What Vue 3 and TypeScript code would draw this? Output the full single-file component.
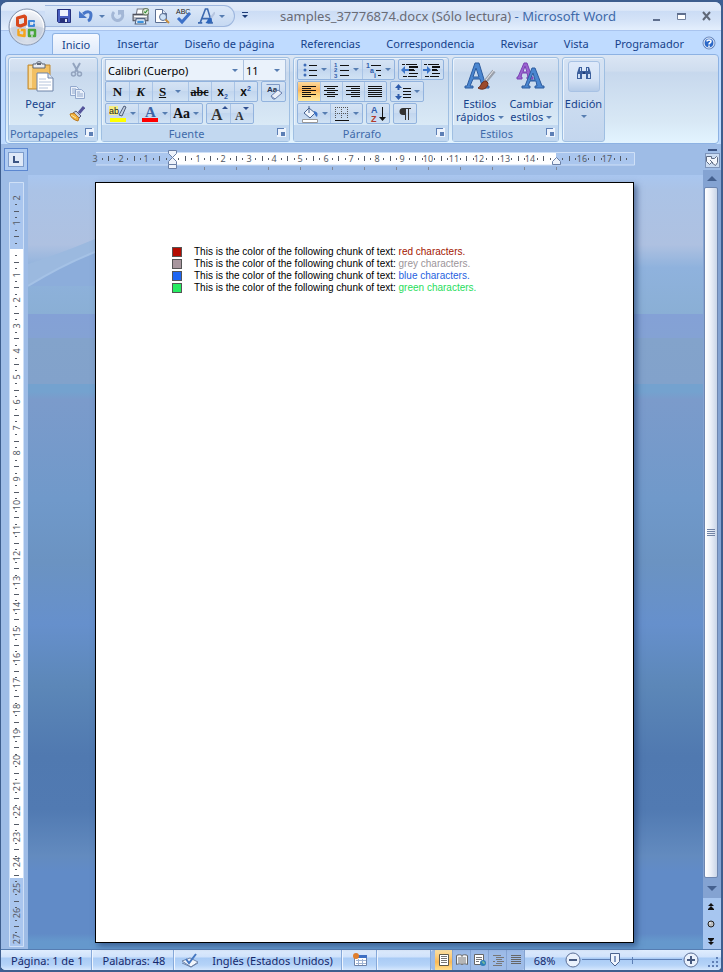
<script setup lang="ts">
import { ref } from 'vue'

const tabs = [
  'Inicio',
  'Insertar',
  'Diseño de página',
  'Referencias',
  'Correspondencia',
  'Revisar',
  'Vista',
  'Programador',
]
const activeTab = ref('Inicio')

const fontName = ref('Calibri (Cuerpo)')
const fontSize = ref('11')
const align = ref('left')
const view = ref('print')
const zoom = ref(31)

const lines = [
  { id: 'red', label: 'red characters.' },
  { id: 'grey', label: 'grey characters.' },
  { id: 'blue', label: 'blue characters.' },
  { id: 'green', label: 'green characters.' },
]

interface Mark {
  kind: 'num' | 'half' | 'dot'
  pos: number
  label: string
}

// Ruler marks: a number per centimetre, a bar at each half, a dot at each quarter.
function marks(origin: number, cm: number, from: number, to: number, skip: number[]): Mark[] {
  const out: Mark[] = []
  for (let q = from * 4; q <= to * 4; q++) {
    const pos = Math.round(origin + (q * cm) / 4)
    if (q % 4 === 0) {
      if (!skip.includes(q / 4)) out.push({ kind: 'num', pos, label: String(Math.abs(q / 4)) })
    } else {
      out.push({ kind: q % 2 === 0 ? 'half' : 'dot', pos, label: '' })
    }
  }
  return out
}

const hMarks = marks(77, 25.6, -3, 17.75, [0, 15])
const vMarks = marks(67, 25.55, -2, 27, [0])
const tabStops = Array.from({ length: 12 }, (_, i) => 109 + i * 32)
</script>

<template>
  <div class="window">
    <header class="titlebar">
      <button class="office" aria-label="Botón de Office">
        <svg viewBox="0 0 38 38" width="38" height="38">
          <defs>
            <radialGradient id="orb" cx="50%" cy="85%" r="80%">
              <stop offset="0" stop-color="#ffffff" />
              <stop offset=".5" stop-color="#d3d9e4" />
              <stop offset="1" stop-color="#f4f6fa" />
            </radialGradient>
          </defs>
          <circle cx="19" cy="19" r="18" fill="url(#orb)" stroke="#7f8fa9" />
          <circle cx="19" cy="19" r="16.5" fill="none" stroke="#fff" />
          <path d="M2 20a17 17 0 0 0 34 0c-9-3-25-3-34 0z" fill="#bcc6d8" opacity=".55" />
          <g fill="none" stroke-linejoin="round">
            <path d="M9.500 17v-7l7-2 1 1v7l-5 2z" stroke="#d8481c" stroke-width="3" />
            <path d="M21 13h5v5h-5z" stroke="#3f86d8" stroke-width="2" />
            <path d="M10.500 22h6v6l-6-1z" stroke="#f3a51f" stroke-width="2.500" />
            <path d="M21 22h6v6h-6z" stroke="#4aa63c" stroke-width="2.500" />
          </g>
          <path d="M18 19h2M19 18v2M11 22h2M24 15h3M23 28h2" stroke="#fff" />
        </svg>
      </button>
      <div class="qat">
        <button class="q" aria-label="Guardar">
          <svg viewBox="0 0 16 16" width="16" height="16">
            <path d="M1.500 1.500h13v13h-12l-1-1z" fill="#4a5fc0" stroke="#25307c" />
            <path d="M4 2h8v6H4z" fill="#eef3fc" />
            <path d="M4 10h8v4H4z" fill="#25307c" />
            <path d="M9 11h2v3H9z" fill="#dfe7f6" />
          </svg>
        </button>
        <button class="q" aria-label="Deshacer">
          <svg viewBox="0 0 16 16" width="16" height="16">
            <path d="M5 6c4-3 8-3 8 1 0 3-1 5-3 6" fill="none" stroke="#4877c8" stroke-width="3" />
            <path d="M1 3v7h8z" fill="#4877c8" />
          </svg>
        </button>
        <button class="mini" aria-label="Opciones de deshacer"><i class="caret"></i></button>
        <button class="q" aria-label="Repetir">
          <svg viewBox="0 0 16 16" width="16" height="16">
            <path d="M4 4a5 5 0 1 0 8 1" fill="none" stroke="#a3b7d6" stroke-width="3" />
            <path d="M8 2h6v6l-2-2-4 1z" fill="#a3b7d6" />
          </svg>
        </button>
        <button class="q" aria-label="Imprimir">
          <svg viewBox="0 0 16 16" width="17" height="17">
            <path d="M4 6 5 1h7l-1 5z" fill="#fff" stroke="#777b86" />
            <path d="M1 6h14v6H1z" fill="#b7bac2" stroke="#4f525c" />
            <path d="M2 8h12" stroke="#fff" />
            <path d="M4 10h8l1 5H3z" fill="#e8f1fb" stroke="#51627e" />
            <path d="M5 13h6" stroke="#3d92dd" stroke-width="2" />
            <circle cx="13" cy="3.500" r="3" fill="#dfe9d9" stroke="#6d7e65" />
            <path d="m11.500 3.500 1 1 2-2.500" fill="none" stroke="#2c8b2c" />
          </svg>
        </button>
        <button class="q" aria-label="Vista preliminar">
          <svg viewBox="0 0 16 16" width="16" height="16">
            <path d="M1.500 1.500h7l4 4v9h-11z" fill="#fff" stroke="#5b6f93" />
            <path d="M8.500 1.500v4h4" fill="#dce6f5" stroke="#5b6f93" />
            <circle cx="9" cy="9" r="3.500" fill="#cfe3f7" stroke="#5b6f93" />
            <path d="m11.500 11.500 3.500 3.500" stroke="#c98d3b" stroke-width="2" />
          </svg>
        </button>
        <button class="q" aria-label="Ortografía">
          <svg viewBox="0 0 18 18" width="18" height="18">
            <text x="1" y="7" font-size="7" fill="#1a1a1a">ABC</text>
            <path d="m3 11 4 4 8-9" fill="none" stroke="#3d71c8" stroke-width="3" />
          </svg>
        </button>
        <button class="q" aria-label="Estilos rápidos">
          <svg viewBox="0 0 16 16" width="17" height="17">
            <path d="M2 14 7 1h2l4 13M4 10h7M0 14h4M9 14h5" fill="none" stroke="#3c69b0" stroke-width="1.500" />
            <path d="m16 4-5 7" stroke="#b7c6e0" stroke-width="2" />
            <path d="M12 9c-3 0-3 4-5 5 3 1 6 0 6-4z" fill="#2b65bd" />
          </svg>
        </button>
        <button class="mini" aria-label="Más estilos"><i class="caret"></i></button>
      </div>
      <button class="customize" aria-label="Personalizar barra"><i class="caret dark"></i></button>
      <h1 class="title">
        <span class="file">samples_37776874.docx (Sólo lectura)</span> - Microsoft Word
      </h1>
      <div class="controls">
        <button aria-label="Minimizar">
          <svg viewBox="0 0 12 12" width="12" height="12"><path d="M2 10h7" stroke="#5f6f8e" stroke-width="2" /></svg>
        </button>
        <button aria-label="Maximizar">
          <svg viewBox="0 0 12 12" width="12" height="12">
            <path d="M1.500 3.500h8v6h-8z" fill="#fff" stroke="#71809c" />
            <path d="M1 4h9" stroke="#5f6f8e" stroke-width="2" />
          </svg>
        </button>
        <button aria-label="Cerrar">
          <svg viewBox="0 0 12 12" width="12" height="12">
            <path d="m2 2 7 8M9 2l-7 8" stroke="#5f6878" stroke-width="2" />
          </svg>
        </button>
      </div>
    </header>

    <nav class="tabs">
      <button v-for="t in tabs" :key="t" class="tab" :class="{ active: t === activeTab }" @click="activeTab = t">
        {{ t }}
      </button>
      <button class="help" aria-label="Ayuda">
        <svg viewBox="0 0 14 14" width="14" height="14">
          <circle cx="7" cy="7" r="6" fill="#2b68c8" stroke="#6e89b8" />
          <circle cx="7" cy="7" r="5" fill="none" stroke="#fff" />
          <path d="M5 5.500c0-2 4-2 4 0 0 1.500-2 1-2 3M7 9.500v1.500" fill="none" stroke="#fff" stroke-width="1.500" />
        </svg>
      </button>
    </nav>

    <section class="ribbon">
      <div class="group clip">
        <div class="body row">
          <button class="big paste">
            <svg viewBox="0 0 32 32" width="32" height="32">
              <path d="M3 4h22v24H3z" fill="#f2c063" stroke="#c08a35" />
              <path d="M4 5h3v22H4z" fill="#fadb9a" />
              <path d="M8 3h3c0-3 6-3 6 0h3v4H8z" fill="#e9ecf2" stroke="#5e6675" />
              <path d="M12 2h4v2h-4z" fill="#5e6675" />
              <path d="M12 12h11l5 5v13H12z" fill="#fff" stroke="#6d83a8" />
              <path d="M23 12v5h5" fill="#dfe8f6" stroke="#6d83a8" />
              <path d="M14 18h7M14 21h12M14 24h12M14 27h9" stroke="#b5c4dc" />
            </svg>
            <span>Pegar</span>
            <i class="caret"></i>
          </button>
          <div class="stack">
            <button class="icon" aria-label="Cortar">
              <svg viewBox="0 0 16 16" width="16" height="16" fill="none" stroke="#93a4bf">
                <path d="m4 1 5 9M11 1 6 10" stroke-width="2" />
                <circle cx="4.500" cy="12" r="2" stroke-width="1.500" />
                <circle cx="10.500" cy="12" r="2" stroke-width="1.500" />
              </svg>
            </button>
            <button class="icon" aria-label="Copiar">
              <svg viewBox="0 0 16 16" width="16" height="16" fill="#e9f0fa" stroke="#92a8cd">
                <path d="M1.500 2.500h6l2 2v7h-8z" />
                <path d="M3 5h4M3 7h3M3 9h3" />
                <path d="M6.500 5.500h6l3 3v6h-9z" />
                <path d="M8 8h3M8 10h6M8 12h6" />
              </svg>
            </button>
            <button class="icon" aria-label="Copiar formato">
              <svg viewBox="0 0 16 16" width="16" height="16">
                <path d="m15 1-5 6" stroke="#55559b" stroke-width="3" />
                <path d="m7 5 5 5-2 2-6-5z" fill="#c9cfdd" stroke="#555d80" />
                <path d="M5 7 1 8c1 4 4 6 8 7l1-3z" fill="#f0b13d" stroke="#bb7a22" />
                <path d="m2 9 5 3" stroke="#fde6a4" />
              </svg>
            </button>
          </div>
        </div>
        <footer>Portapapeles<button class="launch" aria-label="Cuadro Portapapeles"></button></footer>
      </div>

      <div class="group font">
        <div class="body">
          <div class="combos">
            <label class="combo name"
              ><select v-model="fontName" aria-label="Fuente"><option>Calibri (Cuerpo)</option></select
              ><i class="caret"></i
            ></label>
            <label class="combo size"
              ><select v-model="fontSize" aria-label="Tamaño de fuente"><option>11</option></select
              ><i class="caret"></i
            ></label>
          </div>
          <div class="row">
            <div class="set">
              <button class="b serif" aria-label="Negrita">N</button>
              <button class="b serif italic" aria-label="Cursiva">K</button>
              <button class="b serif more wide" aria-label="Subrayado"><u>S</u><i class="caret"></i></button>
              <button class="b serif small" aria-label="Tachado"><s>abc</s></button>
              <button class="b script" aria-label="Subíndice">x<sub>2</sub></button>
              <button class="b script" aria-label="Superíndice">x<sup>2</sup></button>
            </div>
            <div class="set">
              <button class="b" aria-label="Borrar formato">
                <svg viewBox="0 0 18 18" width="18" height="18">
                  <path d="M1.500 1.500h13v8" fill="none" stroke="#7d97c4" />
                  <text x="2" y="9" font-size="8" font-weight="bold" fill="#26324f">Aa</text>
                  <path d="m6 13 7-6 4 3-7 6H8z" fill="#e9eef8" stroke="#6980ae" />
                  <path d="m6 13 4 3" stroke="#6980ae" />
                </svg>
              </button>
            </div>
          </div>
          <div class="row">
            <div class="set">
              <button class="b more" aria-label="Color de resaltado">
                <svg viewBox="0 0 18 18" width="18" height="18">
                  <path d="M0 1h9v9H0z" fill="#f6ef83" />
                  <text x="0" y="9" font-size="9" fill="#222">ab</text>
                  <path d="m15 1-5 9 3 1 4-9z" fill="#c3cfe2" stroke="#4d5c7a" />
                  <path d="M1 13h16v4H1z" fill="#ffff00" />
                </svg>
                <i class="caret"></i>
              </button>
              <button class="b more" aria-label="Color de fuente">
                <svg viewBox="0 0 18 18" width="18" height="18">
                  <text x="4" y="12" class="seriftext" font-size="15" font-weight="bold" fill="#3e65a5">A</text>
                  <path d="M1 13h16v4H1z" fill="#ff0000" />
                </svg>
                <i class="caret"></i>
              </button>
              <button class="b serif more case" aria-label="Cambiar mayúsculas">Aa<i class="caret"></i></button>
            </div>
            <div class="set">
              <button class="b" aria-label="Agrandar fuente">
                <svg viewBox="0 0 18 18" width="18" height="18">
                  <text x="1" y="15" class="seriftext" font-size="16" font-weight="bold" fill="#333">A</text>
                  <path d="m12 4 3-3 3 3z" fill="#2f4f90" />
                </svg>
              </button>
              <button class="b" aria-label="Encoger fuente">
                <svg viewBox="0 0 18 18" width="18" height="18">
                  <text x="2" y="15" class="seriftext" font-size="12" font-weight="bold" fill="#333">A</text>
                  <path d="m10 2 3 3 3-3z" fill="#2f4f90" />
                </svg>
              </button>
            </div>
          </div>
        </div>
        <footer>Fuente<button class="launch" aria-label="Cuadro Fuente"></button></footer>
      </div>

      <div class="group para">
        <div class="body">
          <div class="row">
            <div class="set">
              <button class="b more" aria-label="Viñetas">
                <svg viewBox="0 0 16 16" width="16" height="16">
                  <g fill="#3f6db8"><circle cx="3" cy="3" r="1.500" /><circle cx="3" cy="8" r="1.500" /><circle cx="3" cy="13" r="1.500" /></g>
                  <path d="M7 3.500h8M7 8.500h8M7 13.500h8" stroke="#111" />
                </svg>
                <i class="caret"></i>
              </button>
              <button class="b more" aria-label="Numeración">
                <svg viewBox="0 0 16 16" width="16" height="16">
                  <g font-size="6" font-weight="bold" fill="#2f5cab"><text x="0" y="5">1</text><text x="0" y="10">2</text><text x="0" y="16">3</text></g>
                  <path d="M6 3.500h9M6 8.500h9M6 13.500h9" stroke="#111" />
                </svg>
                <i class="caret"></i>
              </button>
              <button class="b more" aria-label="Lista multinivel">
                <svg viewBox="0 0 16 16" width="16" height="16">
                  <g font-size="7" font-weight="bold" fill="#2f5cab"><text x="0" y="6">1</text><text x="4" y="11">a</text><text x="8" y="16">i</text></g>
                  <path d="M5 3.500h10M10 8.500h5M12 13.500h3" stroke="#111" />
                </svg>
                <i class="caret"></i>
              </button>
            </div>
            <div class="set">
              <button class="b" aria-label="Disminuir sangría">
                <svg viewBox="0 0 18 16" width="18" height="16">
                  <path d="M1 2.500h3M5 2.500h11M8 5.500h9M8 8.500h6M8 11.500h9M2 14.500h4M7 14.500h9" stroke="#111" />
                  <path d="M8 4h9v2H8zM8 7h5v2H8z" fill="#111" />
                  <path d="m0 8 4-4v3h4v2H4v3z" fill="#3b75c9" />
                </svg>
              </button>
              <button class="b" aria-label="Aumentar sangría">
                <svg viewBox="0 0 18 16" width="18" height="16">
                  <path d="M1 2.500h3M5 2.500h11M9 5.500h8M9 8.500h6M9 11.500h8M2 14.500h4M7 14.500h9" stroke="#111" />
                  <path d="M9 4h8v2H9zM9 7h5v2H9z" fill="#111" />
                  <path d="m8 8-4-4v3H0v2h4v3z" fill="#3b75c9" />
                </svg>
              </button>
            </div>
          </div>
          <div class="row">
            <div class="set">
              <button class="b" :class="{ on: align === 'left' }" aria-label="Izquierda" @click="align = 'left'">
                <svg viewBox="0 0 16 14" width="16" height="14"><path d="M1 1.500h14M1 3.500h9M1 5.500h14M1 7.500h9M1 9.500h14M1 11.500h9" stroke="#111" /></svg>
              </button>
              <button class="b" :class="{ on: align === 'center' }" aria-label="Centrar" @click="align = 'center'">
                <svg viewBox="0 0 16 14" width="16" height="14"><path d="M1 1.500h14M4 3.500h8M1 5.500h14M4 7.500h8M1 9.500h14M4 11.500h8" stroke="#111" /></svg>
              </button>
              <button class="b" :class="{ on: align === 'right' }" aria-label="Derecha" @click="align = 'right'">
                <svg viewBox="0 0 16 14" width="16" height="14"><path d="M1 1.500h14M6 3.500h9M1 5.500h14M6 7.500h9M1 9.500h14M6 11.500h9" stroke="#111" /></svg>
              </button>
              <button class="b" :class="{ on: align === 'full' }" aria-label="Justificar" @click="align = 'full'">
                <svg viewBox="0 0 16 14" width="16" height="14"><path d="M1 1.500h14M1 3.500h14M1 5.500h14M1 7.500h14M1 9.500h14M1 11.500h14" stroke="#111" /></svg>
              </button>
            </div>
            <div class="set">
              <button class="b more" aria-label="Interlineado">
                <svg viewBox="0 0 16 16" width="16" height="16">
                  <path d="M3.500 3v3M3.500 10v4" stroke="#2f5cab" stroke-width="2" />
                  <path d="m0 4 3.500-4L7 4zM0 12l3.500 4L7 12z" fill="#2f5cab" />
                  <path d="M8 4.500h8M8 7.500h8M8 10.500h8M8 13.500h8" stroke="#111" />
                </svg>
                <i class="caret"></i>
              </button>
            </div>
          </div>
          <div class="row">
            <div class="set">
              <button class="b more" aria-label="Sombreado">
                <svg viewBox="0 0 18 18" width="18" height="18">
                  <path d="m3 8 5-5 6 5-5 5z" fill="#f1f5fb" stroke="#45618f" />
                  <path d="M8 1v7" stroke="#45618f" />
                  <path d="M13 6c4 1 4 3 3 6-2-1-2-3-3-4z" fill="#3e74c7" />
                  <path d="M1.500 14.500h15v3h-15z" fill="#fff" stroke="#999" />
                </svg>
                <i class="caret"></i>
              </button>
              <button class="b more" aria-label="Bordes">
                <svg viewBox="0 0 16 16" width="16" height="16">
                  <path d="M1.500 1v12M7.500 1v12M13.500 1v12M1 1.500h13M1 7.500h13" stroke="#555" stroke-dasharray="1 1" />
                  <path d="M1 14.500h14" stroke="#111" />
                </svg>
                <i class="caret"></i>
              </button>
            </div>
            <div class="set">
              <button class="b" aria-label="Ordenar">
                <svg viewBox="0 0 18 18" width="18" height="18">
                  <g font-size="9" font-weight="bold"><text x="2" y="8" fill="#2f5cab">A</text><text x="2" y="17" fill="#b13a2c">Z</text></g>
                  <path d="M13.500 2v13" stroke="#111" />
                  <path d="M10 12h7l-3.500 4z" fill="#111" />
                </svg>
              </button>
            </div>
            <div class="set">
              <button class="b" aria-label="Mostrar todo">
                <svg viewBox="0 0 16 16" width="16" height="16">
                  <path d="M8 2H6a3 3 0 0 0 0 7h2z" fill="#333" />
                  <path d="M6 2.500h8M8.500 2v12M11.500 2v12" stroke="#333" />
                </svg>
              </button>
            </div>
          </div>
        </div>
        <footer>Párrafo<button class="launch" aria-label="Cuadro Párrafo"></button></footer>
      </div>

      <div class="group styles">
        <div class="body row">
          <button class="big">
            <svg viewBox="0 0 32 32" width="32" height="32">
              <path d="M11 2h4l7 23h3v2h-9v-2h2l-2-7H9l-3 7h3v2H1v-2h2zm1 5-3 9h6z" fill="#4a86d0" stroke="#2d5c9f" />
              <path d="m30 10-9 11" stroke="#9aa0ab" stroke-width="4" />
              <path d="m30 9-8 10" stroke="#e8e8ec" />
              <path d="M22 20c-5 0-5 6-8 7 5 3 10 0 10-5z" fill="#9b4a2c" stroke="#6e2e1c" />
            </svg>
            <span>Estilos</span>
            <span>rápidos <i class="caret"></i></span>
          </button>
          <button class="big">
            <svg viewBox="0 0 32 32" width="32" height="32">
              <path d="M9 2h3l5 14h1v2h-6v-2h1l-1-4H7l-1 4h1v2H2v-2h1zm1 3-2 6h4z" fill="#9a63d0" stroke="#7a43b4" />
              <path d="M17 7h3l7 18h2v2h-9v-2h2l-1-5h-6l-2 5h2v2H7v-2h3zm1 5-3 7h5z" fill="#4a86d0" stroke="#2d5c9f" />
            </svg>
            <span>Cambiar</span>
            <span>estilos <i class="caret"></i></span>
          </button>
        </div>
        <footer>Estilos<button class="launch" aria-label="Cuadro Estilos"></button></footer>
      </div>

      <div class="group edit">
        <button class="big">
          <span class="plate">
            <svg viewBox="0 0 18 16" width="18" height="16">
              <path d="M4 1h3v4h4V1h3l2 6v6h-5V8H7v5H2V7z" fill="#3c5f9c" />
              <path d="M3 8h2v4H3zM13 8h2v4h-2zM5 2h1v3H5zM12 2h1v3h-1z" fill="#cfe0f6" />
              <path d="M8 6h2v2H8z" fill="#22407a" />
            </svg>
          </span>
          <span>Edición</span>
          <i class="caret"></i>
        </button>
      </div>
    </section>

    <main class="work">
      <button class="tabsel" aria-label="Tabulación izquierda"><span></span></button>
      <div class="hruler">
        <svg width="540" height="20" viewBox="0 0 540 20">
          <path d="M1 3h538v12H1z" fill="#aac6ee" />
          <path d="M77 3h384v12H77z" fill="#fff" />
          <path d="M1 2.500h538.500v12.500H1" fill="none" stroke="#cfe0f7" />
          <template v-for="m in hMarks" :key="m.pos">
            <text v-if="m.kind === 'num'" :x="m.pos" y="12" class="num">{{ m.label }}</text>
            <rect v-else-if="m.kind === 'half'" :x="m.pos" y="6" width="1" height="5" fill="#555b66" />
            <rect v-else :x="m.pos" y="8" width="1" height="2" fill="#555b66" />
          </template>
          <rect v-for="x in tabStops" :key="x" :x="x" y="17" width="1" height="3" fill="#7f8797" />
          <g fill="#eef3fb" stroke="#6b80a6">
            <path d="M73.500.500h8v3l-4 4-4-4z" />
            <path d="m77.500 7.500 4 4v3h-8v-3z" />
            <path d="M73.500 14.500h8v4h-8z" />
            <path d="m461.500 7.500 4 4v3h-8v-3z" />
          </g>
        </svg>
      </div>

      <div class="side">
        <div class="corner">
          <i class="split"></i>
          <button aria-label="Regla">
            <svg viewBox="0 0 14 12" width="14" height="12" fill="#f4f7fc" stroke="#5e6b83">
              <path d="M1.500 1.500h5v2h3l2-2 1 1v5l-2 3-4-3-2 2-3-3z" />
              <path d="m5 5 3 3" />
            </svg>
          </button>
        </div>
        <div class="scroll">
          <button class="arrow" aria-label="Subir"><i class="tri up"></i></button>
          <div class="thumb"><i></i></div>
          <button class="arrow down" aria-label="Bajar"><i class="tri"></i></button>
        </div>
        <div class="browse">
          <button aria-label="Página anterior">
            <svg viewBox="0 0 8 8" width="8" height="8"><path d="m4 0 3 3H1zM4 3l3 3H1zM1 6h6v1H1z" fill="#111" /></svg>
          </button>
          <button aria-label="Objeto de búsqueda">
            <svg viewBox="0 0 8 8" width="8" height="8"><circle cx="4" cy="4" r="3" fill="#b9bcc0" stroke="#222" /><path d="M2 3h2" stroke="#fff" /></svg>
          </button>
          <button aria-label="Página siguiente">
            <svg viewBox="0 0 8 8" width="8" height="8"><path d="m4 8 3-3H1zM4 5l3-3H1zM1 1h6v1H1z" fill="#111" /></svg>
          </button>
        </div>
      </div>

      <div class="vruler">
        <svg width="15" height="765" viewBox="0 0 15 765">
          <path d="M0 0h15v765H0z" fill="#aac6ee" />
          <path d="M0 67h15v629H0z" fill="#fff" />
          <path d="M.500.500h14v764H.500z" fill="none" stroke="#cfe0f7" />
          <template v-for="m in vMarks" :key="m.pos">
            <text v-if="m.kind === 'num'" :transform="`translate(11 ${m.pos}) rotate(-90)`" class="num">{{ m.label }}</text>
            <rect v-else-if="m.kind === 'half'" x="5" :y="m.pos" width="5" height="1" fill="#555b66" />
            <rect v-else x="6" :y="m.pos" width="2" height="1" fill="#555b66" />
          </template>
        </svg>
      </div>

      <div class="desk">
        <svg class="swoosh" viewBox="0 0 67 80" width="67" height="80">
          <path d="M0 51Q34 40 67 26V39Q34 52 0 73z" fill="#9bb9df" />
          <path d="M0 73Q34 52 67 39V73z" fill="#8caddb" />
          <path d="M0 73Q34 52 67 39" fill="none" stroke="#a5c2e6" stroke-width="2" />
        </svg>
        <article class="page">
          <ul>
            <li v-for="l in lines" :key="l.id" :class="l.id">
              <i></i>
              <p>This is the color of the following chunk of text: <span>{{ l.label }}</span></p>
            </li>
          </ul>
        </article>
      </div>
    </main>

    <footer class="status">
      <button class="cell">Página: 1 de 1</button>
      <button class="cell">Palabras: 48</button>
      <button class="cell nosep" aria-label="Revisión">
        <svg viewBox="0 0 16 16" width="16" height="16">
          <path d="m0 9 8-3 8 4-7 5z" fill="#f2f6fc" stroke="#6d83a8" />
          <path d="m0 11 9 4 7-4" fill="none" stroke="#6d83a8" />
          <path d="m4 7 3 4 7-9" fill="none" stroke="#4477c2" stroke-width="2" />
        </svg>
      </button>
      <button class="cell">Inglés (Estados Unidos)</button>
      <button class="cell" aria-label="Macro">
        <svg viewBox="0 0 16 16" width="16" height="16">
          <path d="M2.500 3.500h12v10h-12z" fill="#fff" stroke="#6d83a8" />
          <path d="M5 3h10v3H5z" fill="#3d6fc4" />
          <path d="M4 8.500h10M4 11.500h10M6.500 7v6M10.500 7v6" stroke="#9fb3d3" />
          <circle cx="4" cy="4" r="3" fill="#e07f2e" />
        </svg>
      </button>
      <span class="fill"></span>
      <div class="views">
        <button :class="{ on: view === 'print' }" aria-label="Diseño de impresión" @click="view = 'print'">
          <svg viewBox="0 0 12 12" width="12" height="12"><path d="M1.500.500h9v11h-9z" fill="#fff" stroke="#5e5a4c" /><path d="M3 2.500h6M3 4.500h6M3 6.500h6M3 8.500h6" stroke="#777" /></svg>
        </button>
        <button :class="{ on: view === 'read' }" aria-label="Lectura" @click="view = 'read'">
          <svg viewBox="0 0 12 12" width="12" height="12"><path d="M.500 1.500c2-1 4-1 5.500 0 1.500-1 3.500-1 5.500 0v9c-2-1-4-1-5.500 0-1.500-1-3.500-1-5.500 0z" fill="#f5f6f8" stroke="#666" /><path d="M6 2v9M2 4h3M2 6h3M2 8h3M7 4h3M7 6h3M7 8h3" stroke="#777" /></svg>
        </button>
        <button :class="{ on: view === 'web' }" aria-label="Diseño web" @click="view = 'web'">
          <svg viewBox="0 0 12 12" width="12" height="12"><path d="M.500.500h9v10h-9z" fill="#fff" stroke="#666" /><path d="M2 3.500h6M2 5.500h6M2 7.500h3" stroke="#777" /><circle cx="9" cy="9" r="3" fill="#2d7fb8" /><path d="M8 8h2v2" stroke="#8fd08a" fill="none" /></svg>
        </button>
        <button :class="{ on: view === 'outline' }" aria-label="Esquema" @click="view = 'outline'">
          <svg viewBox="0 0 12 12" width="12" height="12"><path d="M1 1.500h8M4 3.500h8M4 5.500h6M1 7.500h2M5 7.500h7M4 9.500h6M1 11.500h9" stroke="#777" /></svg>
        </button>
        <button :class="{ on: view === 'draft' }" aria-label="Borrador" @click="view = 'draft'">
          <svg viewBox="0 0 12 12" width="12" height="12"><path d="M1 1.500h10M1 3.500h10M1 5.500h10M1 7.500h10M1 9.500h10" stroke="#666" /></svg>
        </button>
      </div>
      <button class="pct">68%</button>
      <button class="zoombtn" aria-label="Alejar">
        <svg viewBox="0 0 16 16" width="16" height="16"><circle cx="8" cy="8" r="7" fill="#e9f1fc" stroke="#5c6f96" /><path d="M4 8h8" stroke="#46597f" stroke-width="2" /></svg>
      </button>
      <input v-model.number="zoom" class="zoom" type="range" min="0" max="100" aria-label="Zoom" />
      <button class="zoombtn" aria-label="Acercar">
        <svg viewBox="0 0 16 16" width="16" height="16"><circle cx="8" cy="8" r="7" fill="#e9f1fc" stroke="#5c6f96" /><path d="M4 8h8M8 4v8" stroke="#46597f" stroke-width="2" /></svg>
      </button>
      <svg class="grip" viewBox="0 0 12 12" width="12" height="12">
        <path d="M8 0h2v2H8zM4 4h2v2H4zM8 4h2v2H8zM0 8h2v2H0zM4 8h2v2H4zM8 8h2v2H8z" fill="#5f7fb5" />
      </svg>
    </footer>
  </div>
</template>

<style>
body {
  margin: 0;
  background: #3c5f96;
}
</style>

<style scoped>
.window {
  box-sizing: border-box;
  min-height: 100vh;
  display: flex;
  flex-direction: column;
  border: 2px solid #3e5e8e;
  border-left-width: 1px;
  border-radius: 8px 8px 6px 6px;
  background: #bfdbff;
  font: 11px/13px 'Noto Sans', 'Open Sans', sans-serif;
  color: #15428b;
  overflow: hidden;
}
button {
  display: flex;
  align-items: center;
  justify-content: center;
  flex: none;
  margin: 0;
  padding: 0;
  border: 0;
  background: none;
  font: inherit;
  color: inherit;
  white-space: nowrap;
}
svg {
  display: block;
  flex: none;
}
.caret {
  flex: none;
  display: inline-block;
  width: 0;
  height: 0;
  border: 3px solid transparent;
  border-top-color: #567db1;
  border-bottom: 0;
}
.caret.dark {
  padding-top: 1px;
  border-top-color: #1d3c78;
  background: linear-gradient(#1d3c78, #1d3c78) 0 0 / 6px 1px no-repeat;
}

/* Title bar */
.titlebar {
  position: relative;
  display: flex;
  align-items: center;
  height: 28px;
  padding: 0 8px 0 44px;
  background: linear-gradient(#e3ebf9, #dde8f8 30%, #cbdcf5 32%, #d6e4f8 70%, #e4effd);
  border-bottom: 1px solid #a9c4ee;
}
.office {
  position: absolute;
  left: 7px;
  top: 6px;
  z-index: 2;
}
.qat {
  display: flex;
  align-items: center;
  height: 20px;
  gap: 2px;
  padding: 0 8px 0 9px;
  border: 1px solid #9db6de;
  border-left: 0;
  border-radius: 0 11px 11px 0;
  background: linear-gradient(#dce8f8, #c6d9f2);
}
.q {
  width: 20px;
}
.mini {
  width: 8px;
}
.customize {
  width: 20px;
}
.customize::before {
  content: '';
  width: 6px;
  height: 1px;
  margin-right: -6px;
  margin-bottom: 8px;
  background: #1d3c78;
}
.customize .caret.dark {
  padding: 0;
  background: none;
}
.title {
  flex: 1;
  margin: 0 10px 0 0;
  font: 13px/18px 'Noto Sans', 'Open Sans', sans-serif;
  color: #3e6aaa;
  text-align: center;
  white-space: nowrap;
}
.file {
  color: #696b75;
}
.controls {
  display: flex;
  gap: 13px;
}

/* Tabs */
.tabs {
  display: flex;
  align-items: stretch;
  height: 23px;
  padding: 0 5px 0 51px;
}
.tab {
  padding: 1px 13px 0;
}
.tab.active {
  padding: 0 9px;
  margin-top: 2px;
  margin-right: 4px;
  border: 1px solid #8db2e3;
  border-bottom: 0;
  border-radius: 3px 3px 0 0;
  background: linear-gradient(#f6f9ff, #dfeafa);
}
.help {
  margin-left: auto;
}

/* Ribbon */
.ribbon {
  display: flex;
  gap: 3px;
  margin: 0 2px 0 4px;
  padding: 2px 2px 1px;
  border: 1px solid #8db2e3;
  border-radius: 4px;
  background: linear-gradient(#dbe6f4, #cfddef 18%, #c7d8ed 20%, #d8e8f5 75%, #e3f4ff);
  box-shadow: 0 1px 0 #d7f2ff;
}
.group {
  display: flex;
  flex-direction: column;
  box-sizing: border-box;
  height: 85px;
  border: 1px solid #9fbfe2;
  border-radius: 3px;
  box-shadow: inset 1px 1px 0 #eaf3fd;
}
.body {
  flex: 1;
  padding: 1px 3px 0;
}
.group footer {
  display: flex;
  align-items: center;
  justify-content: center;
  position: relative;
  height: 16px;
  padding-right: 18px;
  background: #c2d8f0;
  color: #3e6aaa;
}
.launch {
  position: absolute;
  right: 3px;
  top: 3px;
  width: 9px;
  height: 9px;
  background:
    linear-gradient(#5d7fb5, #5d7fb5) 4px 4px / 4px 4px no-repeat,
    linear-gradient(#5d7fb5, #5d7fb5) 0 0 / 7px 1px no-repeat,
    linear-gradient(#5d7fb5, #5d7fb5) 0 0 / 1px 7px no-repeat,
    #edf3fc;
}
.row {
  display: flex;
  gap: 3px;
}
.body > .row {
  margin-bottom: 1px;
}
.clip {
  width: 90px;
}
.font {
  width: 189px;
}
.para {
  width: 156px;
}
.styles {
  width: 107px;
}
.edit {
  width: 43px;
  background: linear-gradient(#d6e3f3, #c3d6ee);
}
.clip .body {
  gap: 0;
}
.big {
  flex-direction: column;
  justify-content: flex-start;
  flex: 1;
  line-height: 13px;
}
.styles .body {
  padding: 3px 1px 0;
  gap: 0;
}
.paste {
  padding-top: 2px;
  gap: 4px;
}
.styles svg {
  margin-bottom: 4px;
}
.styles .caret {
  vertical-align: 2px;
}
.edit .big {
  padding-top: 3px;
  gap: 5px;
}
.plate {
  display: flex;
  justify-content: center;
  padding: 4px 6px 9px;
  border: 1px solid #a8c2e4;
  border-radius: 3px;
  background: linear-gradient(#dfeafa, #d4e2f5 60%, #b5cbe8);
}
.stack {
  display: flex;
  flex-direction: column;
  padding: 3px 12px 0 0;
  gap: 6px;
}
.clip .body {
  padding-right: 0;
}
.combos {
  display: flex;
}
.combo {
  display: flex;
  align-items: center;
  box-sizing: border-box;
  height: 22px;
  padding: 0 5px 0 2px;
  border: 1px solid #abc1de;
  background: #eaf2fb;
  color: #000;
}
.name {
  width: 139px;
}
.size {
  width: 43px;
  margin-left: -1px;
}
.combo select {
  flex: 1;
  min-width: 0;
  appearance: none;
  border: 0;
  padding: 0;
  background: none;
  font: inherit;
  color: inherit;
}
.set {
  display: flex;
  box-sizing: border-box;
  height: 21px;
  border: 1px solid #92b3de;
  border-radius: 2px;
  background: linear-gradient(#d5e3f4, #cbdcf1 45%, #c1d5ee 47%, #d0e2f4);
}
.b {
  width: 22px;
  color: #111;
}
.font .b {
  width: 23px;
}
.b + .b {
  box-shadow: inset 1px 0 0 #a9c4e6;
}
.font .more,
.para .more {
  width: 32px;
  gap: 3px;
}
.font .wide {
  width: 36px;
  gap: 9px;
}
.para .b.on {
  background: linear-gradient(#fcd99c, #fbb45a 45%, #fdcf74 60%, #ffe9a0);
}
.serif {
  font: bold 13px/16px 'Liberation Serif', serif;
}
.italic {
  font-style: italic;
}
.small {
  font-size: 12px;
}
.script {
  font: bold 12px/14px 'Liberation Sans', sans-serif;
}
.script sub,
.script sup {
  font-size: 7px;
  line-height: 7px;
  color: #2f5cab;
}
.script sub {
  align-self: flex-end;
  padding-bottom: 1px;
}
.script sup {
  align-self: flex-start;
  padding-top: 3px;
}
.case {
  font-size: 14px;
}
svg text {
  font-family: 'Liberation Sans', Arial, sans-serif;
}
svg text.seriftext {
  font-family: 'Liberation Serif', serif;
}

/* Work area */
.work {
  flex: 1;
  display: grid;
  grid-template-columns: 27px 1fr 18px;
  grid-template-rows: 31px 1fr;
  background: #9ebce6;
}
.tabsel {
  width: 24px;
  height: 23px;
  margin: 4px 0 0 3px;
  border: 1px solid #5c87d0;
  background: #aecbf2;
  z-index: 1;
}
.tabsel span {
  width: 14px;
  height: 13px;
  border: 1px solid #7e9dcc;
  background:
    linear-gradient(#3c5584, #3c5584) 4px 3px / 2px 7px no-repeat,
    linear-gradient(#3c5584, #3c5584) 4px 8px / 6px 2px no-repeat,
    #dfe9f8;
}
.hruler {
  padding: 6px 67px 0 67px;
}
.hruler svg {
  overflow: visible;
}
.num {
  font: 9px 'Noto Sans', sans-serif;
  text-anchor: middle;
  fill: #555b66;
}
.side {
  grid-column: 3;
  grid-row: 1 / 3;
  display: flex;
  flex-direction: column;
}
.corner {
  display: flex;
  flex-direction: column;
  align-items: center;
  gap: 2px;
  height: 21px;
  padding-top: 5px;
}
.split {
  width: 9px;
  height: 2px;
  background: #3c5584;
}
.corner button {
  width: 15px;
  height: 15px;
  border: 1px solid #7d94ba;
  background: #cbdcf2;
}
.vruler {
  padding: 7px 4px 0 8px;
}
.desk {
  position: relative;
  display: flex;
  padding: 7px 69px 6px 67px;
  background: linear-gradient(
    #a9c6ef 0,
    #abc3e6 2%,
    #aec1e1 9%,
    #8fb2dd 12%,
    #8aafd5 18%,
    #84a1d6 18%,
    #84a2d4 21%,
    #83a3cb 21%,
    #82a2cb 27%,
    #74a2cf 27%,
    #74a2cf 28%,
    #7b9bcb 29%,
    #7099ca 42%,
    #6b93c2 50%,
    #6690cc 58%,
    #5c87b8 66%,
    #5079b0 75%,
    #517ab2 82%,
    #638bbf 88%,
    #618bc7 90%,
    #618bc7 98%,
    #6598cc 99%
  );
}
.swoosh {
  position: absolute;
  left: 0;
  top: 38px;
}
.page {
  position: relative;
  flex: 1;
  border: 1px solid #000;
  background: #fff;
  box-shadow: 3px 3px 6px rgba(30, 60, 110, 0.6);
}
.page ul {
  margin: 0;
  padding: 63px 76px;
  list-style: none;
}
.page li {
  display: flex;
  align-items: center;
  height: 12px;
  font: 10px/12px 'Liberation Sans', Arial, sans-serif;
  color: #000;
}
.page li i {
  box-sizing: border-box;
  width: 10px;
  height: 10px;
  margin-right: 12px;
  border: 1px solid #555;
}
.page p {
  margin: 0;
  white-space: nowrap;
}
.red i { background: #b30b00; }
.red span { color: #a31500; }
.grey i { background: #a8969e; }
.grey span { color: #9b9499; }
.blue i { background: #1f66f2; }
.blue span { color: #1f5fe0; }
.green i { background: #27ec62; }
.green span { color: #27dd5c; }

/* Scroll bar */
.scroll {
  flex: 1;
  display: flex;
  flex-direction: column;
  background: #84a3d2;
}
.arrow {
  height: 17px;
}
.arrow.down {
  height: 20px;
}
.tri {
  width: 0;
  height: 0;
  border: 5px solid transparent;
  border-top-color: #45618f;
  border-bottom: 0;
}
.tri.up {
  border: 5px solid transparent;
  border-bottom-color: #45618f;
  border-top: 0;
}
.thumb {
  flex: 1;
  display: flex;
  align-items: center;
  justify-content: center;
  margin: 0 3px 0 1px;
  border: 1px solid #6d86b0;
  border-radius: 2px;
  background: linear-gradient(90deg, #fff, #e9eef7 50%, #c9d5e8);
}
.thumb i {
  width: 8px;
  height: 7px;
  background: repeating-linear-gradient(#7183a5 0 1px, transparent 1px 2px);
}
.browse {
  display: flex;
  flex-direction: column;
  align-items: center;
  justify-content: space-around;
  height: 51px;
  padding-right: 3px;
  background: #a7c6f0;
}

/* Status bar */
.status {
  display: flex;
  align-items: stretch;
  height: 20px;
  border-top: 1px solid #567db1;
  background: linear-gradient(#e0edfe, #cfe2fb 35%, #a9cbf5 40%, #b5d3f8 75%, #d5e7fd);
  color: #15286b;
}
.cell {
  padding: 0 8px 0 10px;
  border-right: 1px solid #86a9da;
  box-shadow: 1px 0 0 #eef5ff;
}
.cell.nosep {
  padding: 0 4px 0 8px;
  border: 0;
  box-shadow: none;
}
.fill {
  flex: 1;
  border-right: 1px solid #86a9da;
}
.views {
  display: flex;
  padding-left: 4px;
  border-radius: 3px;
  background: #9ebce8;
}
.views button {
  width: 18px;
  box-shadow: inset -1px 0 0 #86a5d3;
}
.views .on {
  background: linear-gradient(#fde3a7, #fbb956 60%, #ffe090);
}
.pct {
  width: 39px;
}
.zoombtn {
  width: 18px;
}
.zoom {
  width: 100px;
  margin: 0;
  appearance: none;
  background:
    linear-gradient(#5d7fb5, #5d7fb5) 0 9px / 100% 1px no-repeat,
    linear-gradient(#5d7fb5, #5d7fb5) 50% 50% / 1px 7px no-repeat;
}
.zoom::-webkit-slider-thumb {
  appearance: none;
  width: 10px;
  height: 14px;
  border: 0;
  background: url("data:image/svg+xml,%3Csvg xmlns='http://www.w3.org/2000/svg' width='10' height='14'%3E%3Cpath d='M.5.5h9v8L5 13 .5 8.500z' fill='%23eef4fd' stroke='%234c648f'/%3E%3Cpath d='M5 3v6' stroke='%238499c0' stroke-width='2'/%3E%3C/svg%3E") no-repeat;
}
.grip {
  align-self: flex-end;
  margin: 0 1px 1px 8px;
}
</style>
